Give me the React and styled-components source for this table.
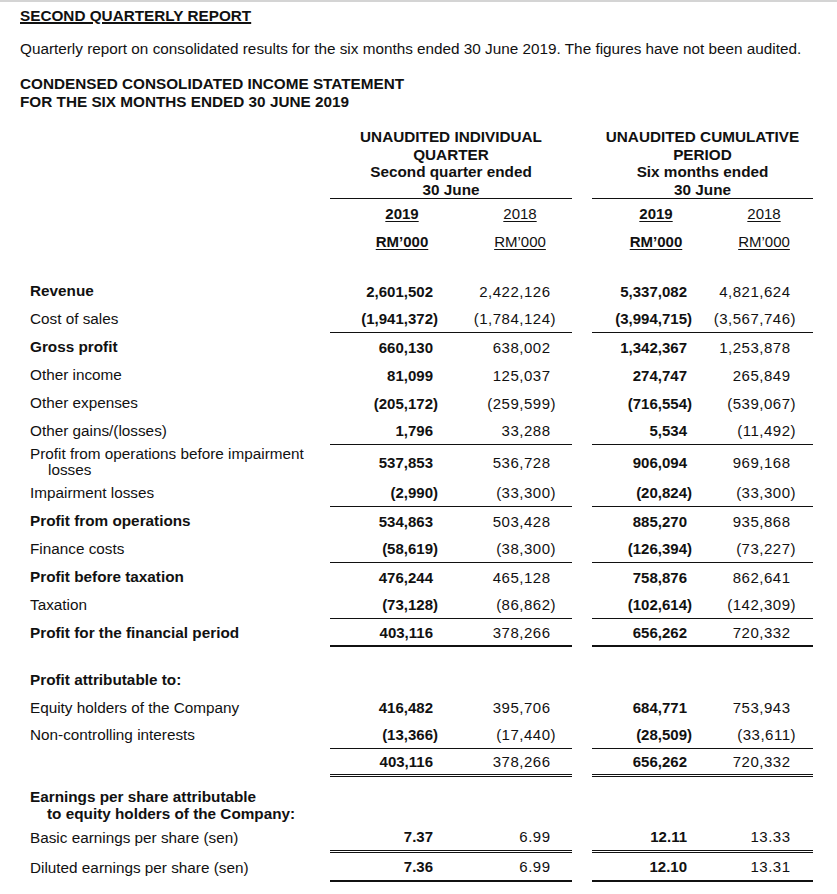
import React from 'react'
import styled, { createGlobalStyle } from 'styled-components'

const GlobalStyle = createGlobalStyle`
  body {
    margin: 0;
    background: #fff;
  }
`

const ink = '#111'

const Page = styled.div`
  width: 837px;
  min-height: 894px;
  box-sizing: border-box;
  border-top: 2px solid #d4d4d4;
  padding: 0 20px;
  font-family: 'Liberation Sans', Arial, sans-serif;
  font-size: 15.3px;
  color: ${ink};
`

const Title = styled.h1`
  margin: 0;
  padding-top: 5px;
  font-size: 15.3px;
  line-height: 17px;
  font-weight: bold;
  text-decoration: underline;
  text-decoration-thickness: 2px;
`

const Intro = styled.p`
  margin: 16px 0 0;
  line-height: 17px;
`

const Heading = styled.h2`
  margin: 18px 0 0;
  font-size: 15.3px;
  line-height: 18px;
  font-weight: bold;
`

const Statement = styled.div`
  margin-top: 17px;
`

const Row = styled.div`
  display: grid;
  grid-template-columns: 310px 124px 118px 20px 117px 104px;
  height: ${props => props.$h || 28}px;
`

const Label = styled.div`
  display: flex;
  align-items: center;
  padding-left: ${props => (props.$hang ? 28 : 10)}px;
  text-indent: ${props => (props.$hang ? -18 : 0)}px;
  line-height: 16px;
  font-weight: ${props => (props.$bold ? 'bold' : 'normal')};
`

const StackLabel = styled.div`
  padding-left: 10px;
  line-height: 17px;
  font-weight: bold;
  align-self: center;
  white-space: nowrap;
`

const Indent = styled.span`
  display: block;
  padding-left: 17px;
`

const GroupHead = styled.div`
  grid-column: ${props => props.$col} / span 2;
  align-self: end;
  text-align: center;
  font-weight: bold;
  line-height: 17.5px;
  border-bottom: 1px solid ${ink};
`

const SubHead = styled.div`
  display: flex;
  align-items: center;
  justify-content: center;
  padding-left: ${props => props.$shift}px;
  font-size: 15px;
  font-weight: ${props => (props.$bold ? 'bold' : 'normal')};
  text-decoration: underline;
  text-underline-offset: 2px;
`

const Gap = styled.div``

const rules = {
  single: `1px solid ${ink}`,
  double: `3px double ${ink}`,
  thick: `2px solid ${ink}`,
}

const Num = styled.div`
  box-sizing: border-box;
  display: flex;
  align-items: center;
  justify-content: flex-end;
  padding-right: ${props => props.$pad}px;
  font-size: 15px;
  font-weight: ${props => (props.$bold ? 'bold' : 'normal')};
  letter-spacing: ${props => (props.$bold ? 0 : 0.5)}px;
  border-bottom: ${props => (props.$rule ? rules[props.$rule] : 'none')};
`

const Paren = styled.span`
  visibility: hidden;
`

const Spacer = styled.div`
  height: ${props => props.$h}px;
`

const pads = [16, 16, 17, 17]

const income = [
  { label: 'Revenue', bold: true, v: ['2,601,502', '2,422,126', '5,337,082', '4,821,624'] },
  { label: 'Cost of sales', v: ['(1,941,372)', '(1,784,124)', '(3,994,715)', '(3,567,746)'], rule: 'single' },
  { label: 'Gross profit', bold: true, v: ['660,130', '638,002', '1,342,367', '1,253,878'] },
  { label: 'Other income', v: ['81,099', '125,037', '274,747', '265,849'] },
  { label: 'Other expenses', v: ['(205,172)', '(259,599)', '(716,554)', '(539,067)'] },
  { label: 'Other gains/(losses)', v: ['1,796', '33,288', '5,534', '(11,492)'], rule: 'single' },
  { label: 'Profit from operations before impairment losses', hang: true, h: 34, v: ['537,853', '536,728', '906,094', '969,168'] },
  { label: 'Impairment losses', v: ['(2,990)', '(33,300)', '(20,824)', '(33,300)'], rule: 'single' },
  { label: 'Profit from operations', bold: true, v: ['534,863', '503,428', '885,270', '935,868'] },
  { label: 'Finance costs', v: ['(58,619)', '(38,300)', '(126,394)', '(73,227)'], rule: 'single' },
  { label: 'Profit before taxation', bold: true, v: ['476,244', '465,128', '758,876', '862,641'] },
  { label: 'Taxation', v: ['(73,128)', '(86,862)', '(102,614)', '(142,309)'], rule: 'single' },
  { label: 'Profit for the financial period', bold: true, v: ['403,116', '378,266', '656,262', '720,332'], rule: 'thick' },
]

const attributable = [
  { label: 'Equity holders of the Company', h: 27, v: ['416,482', '395,706', '684,771', '753,943'] },
  { label: 'Non-controlling interests', v: ['(13,366)', '(17,440)', '(28,509)', '(33,611)'], rule: 'single' },
  { label: '', v: ['403,116', '378,266', '656,262', '720,332'], rule: 'double' },
]

const earnings = [
  { label: 'Basic earnings per share (sen)', h: 31, v: ['7.37', '6.99', '12.11', '13.33'], rule: 'double' },
  { label: 'Diluted earnings per share (sen)', h: 29, v: ['7.36', '6.99', '12.10', '13.31'], rule: 'thick' },
]

function Amount({ value, idx, rule }) {
  const negative = value.endsWith(')')
  return (
    <Num $pad={pads[idx]} $bold={idx % 2 === 0} $rule={rule}>
      {value}
      {!negative && <Paren>)</Paren>}
    </Num>
  )
}

function LineItem({ item }) {
  const [a, b, c, d] = item.v
  return (
    <Row $h={item.h}>
      <Label $bold={item.bold} $hang={item.hang}>{item.label}</Label>
      <Amount value={a} idx={0} rule={item.rule} />
      <Amount value={b} idx={1} rule={item.rule} />
      <Gap />
      <Amount value={c} idx={2} rule={item.rule} />
      <Amount value={d} idx={3} rule={item.rule} />
    </Row>
  )
}

function ColumnHeads() {
  return (
    <>
      <Row $h={71}>
        <Gap />
        <GroupHead $col={2}>
          UNAUDITED INDIVIDUAL<br />QUARTER<br />Second quarter ended<br />30 June
        </GroupHead>
        <GroupHead $col={5}>
          UNAUDITED CUMULATIVE<br />PERIOD<br />Six months ended<br />30 June
        </GroupHead>
      </Row>
      <Row>
        <Gap />
        <SubHead $bold $shift={20}>2019</SubHead>
        <SubHead $shift={14}>2018</SubHead>
        <Gap />
        <SubHead $bold $shift={11}>2019</SubHead>
        <SubHead $shift={6}>2018</SubHead>
      </Row>
      <Row>
        <Gap />
        <SubHead $bold $shift={20}>RM’000</SubHead>
        <SubHead $shift={14}>RM’000</SubHead>
        <Gap />
        <SubHead $bold $shift={11}>RM’000</SubHead>
        <SubHead $shift={6}>RM’000</SubHead>
      </Row>
    </>
  )
}

export default function App() {
  return (
    <Page>
      <GlobalStyle />
      <Title>SECOND QUARTERLY REPORT</Title>
      <Intro>
        Quarterly report on consolidated results for the six months ended 30 June 2019. The figures have not been audited.
      </Intro>
      <Heading>
        CONDENSED CONSOLIDATED INCOME STATEMENT<br />FOR THE SIX MONTHS ENDED 30 JUNE 2019
      </Heading>
      <Statement>
        <ColumnHeads />
        <Spacer $h={22} />
        {income.map(item => <LineItem key={item.label} item={item} />)}
        <Spacer $h={19} />
        <Row>
          <Label $bold>Profit attributable to:</Label>
        </Row>
        {attributable.map((item, i) => <LineItem key={i} item={item} />)}
        <Spacer $h={11} />
        <Row $h={34}>
          <StackLabel>
            Earnings per share attributable
            <Indent>to equity holders of the Company:</Indent>
          </StackLabel>
        </Row>
        {earnings.map(item => <LineItem key={item.label} item={item} />)}
      </Statement>
    </Page>
  )
}
